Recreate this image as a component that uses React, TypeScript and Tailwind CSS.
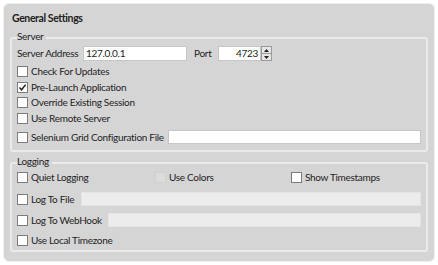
import React from "react";

function Check({ checked = false, disabled = false }: { checked?: boolean; disabled?: boolean }) {
  return (
    <span
      className={
        "flex h-[11px] w-[11px] shrink-0 items-center justify-center border " +
        (disabled ? "border-[#d0d0d0] bg-[#dcdcdc]" : "border-[#7c7c7c] bg-white")
      }
    >
      {checked && (
        <svg width="9" height="9" viewBox="0 0 9 9">
          <path d="M1.5 4.5 L3.6 6.8 L7.6 1.6" fill="none" stroke="#1a1a1a" strokeWidth="1.4" />
        </svg>
      )}
    </span>
  );
}

function CheckRow({ label, checked, disabled, className = "" }: { label: string; checked?: boolean; disabled?: boolean; className?: string }) {
  return (
    <div className={"flex items-center gap-[3px] whitespace-nowrap " + className}>
      <Check checked={checked} disabled={disabled} />
      <span>{label}</span>
    </div>
  );
}

function Group({ title, children, className = "" }: { title: string; children: React.ReactNode; className?: string }) {
  return (
    <div className={"mx-[6px] rounded-[3px] border-2 border-[#ebebeb] pl-[5px] pr-[5px] " + className}>
      <div className="-mt-[9px] h-[13px] leading-[13px]">
        <span className="bg-[#d5d5d5] pr-[3px]">{title}</span>
      </div>
      {children}
    </div>
  );
}

export default function App() {
  return (
    <div className="h-[265px] w-[438px] bg-white p-[3px] font-['Lato',sans-serif] text-[10px] tracking-[-0.3px] text-[#1e1e1e]">
      <div className="h-[259px] rounded-[6px] border border-[#efefef] bg-[#d5d5d5] pt-[7px]">
        <div className="ml-[8px] h-[14px] text-[10.5px] font-bold leading-[14px] tracking-[-0.4px]">General Settings</div>

        <Group title="Server" className="mt-[12px] h-[115px]">
          <div className="mt-[3px] flex h-[15px] items-center whitespace-nowrap">
            <span className="w-[66px] shrink-0">Server Address</span>
            <div className="flex h-[15px] w-[104px] items-center border border-[#c6c6c6] bg-white pl-[2px]">127.0.0.1</div>
            <span className="ml-[7px] w-[24px] shrink-0">Port</span>
            <div className="flex h-[15px] w-[43px] items-center justify-end border border-[#c6c6c6] bg-white pr-[2px]">4723</div>
            <div className="flex h-[15px] w-[11px] flex-col border border-[#9a9a9a] bg-[#e6e6e6]">
              <div className="flex flex-1 items-center justify-center border-b border-[#9a9a9a]">
                <svg width="5" height="3" viewBox="0 0 5 3"><path d="M0 3 L2.5 0 L5 3Z" fill="#222" /></svg>
              </div>
              <div className="flex flex-1 items-center justify-center">
                <svg width="5" height="3" viewBox="0 0 5 3"><path d="M0 0 L2.5 3 L5 0Z" fill="#222" /></svg>
              </div>
            </div>
          </div>
          <CheckRow label="Check For Updates" className="mt-[2px] h-[16px]" />
          <CheckRow label="Pre-Launch Application" checked className="h-[16px]" />
          <CheckRow label="Override Existing Session" className="h-[15px]" />
          <CheckRow label="Use Remote Server" className="h-[16px]" />
          <div className="mt-[4px] flex h-[14px] items-center whitespace-nowrap">
            <Check />
            <span className="ml-[3px] w-[137px] shrink-0">Selenium Grid Configuration File</span>
            <div className="h-[14px] w-[253px] border border-[#c6c6c6] bg-white" />
          </div>
        </Group>

        <Group title="Logging" className="mt-[10px] h-[90px]">
          <div className="mt-[1px] flex h-[16px] items-center">
            <CheckRow label="Quiet Logging" className="w-[138px]" />
            <CheckRow label="Use Colors" disabled className="w-[136px]" />
            <CheckRow label="Show Timestamps" />
          </div>
          <div className="mt-[7px] flex h-[14px] items-center whitespace-nowrap">
            <Check />
            <span className="ml-[3px] w-[50px] shrink-0">Log To File</span>
            <div className="h-[14px] w-[340px] border border-[#e4e4e4] bg-[#ececec]" />
          </div>
          <div className="mt-[7px] flex h-[14px] items-center whitespace-nowrap">
            <Check />
            <span className="ml-[3px] w-[77px] shrink-0">Log To WebHook</span>
            <div className="h-[14px] w-[313px] border border-[#e4e4e4] bg-[#ececec]" />
          </div>
          <CheckRow label="Use Local Timezone" className="mt-[5px] h-[16px]" />
        </Group>
      </div>
    </div>
  );
}
